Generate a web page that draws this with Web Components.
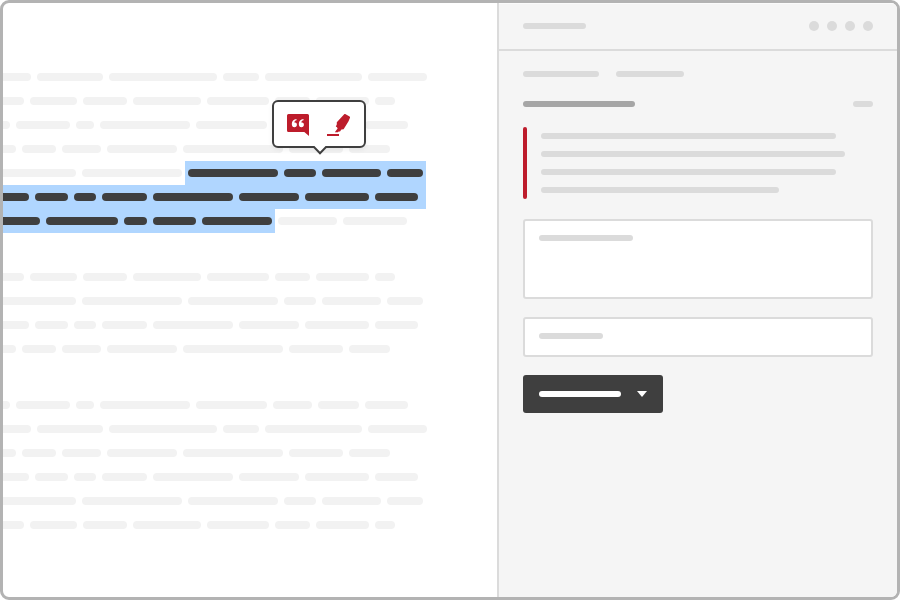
<!DOCTYPE html>
<html lang="en">
<head>
<meta charset="utf-8">
<title>Annotate selection</title>
<style>
html, body { margin: 0; height: 100%; background: #fff; font-family: "Liberation Sans", sans-serif; }
</style>
</head>
<body>
<app-window>
  <reading-pane slot="main"></reading-pane>
  <annotation-panel slot="side"></annotation-panel>
</app-window>
<script>
class Base extends HTMLElement {
  constructor() {
    super();
    this.attachShadow({ mode: 'open' }).innerHTML =
      '<style>:host{display:block;box-sizing:border-box}' + this.constructor.css + '</style>' + this.constructor.html;
  }
}
Base.css = '';
Base.html = '<slot></slot>';

customElements.define('app-window', class extends Base {
  static css = `
    :host { display: flex; width: 900px; height: 600px; border: 3px solid #b3b3b3; border-radius: 9px; overflow: hidden; background: #fff; }
    .main { flex: 1; min-width: 0; overflow: hidden; }
    .side { width: 400px; flex: none; }`;
  static html = '<div class="main"><slot name="main"></slot></div><div class="side"><slot name="side"></slot></div>';
});

// A rounded placeholder bar; its width comes from the "w" attribute.
customElements.define('text-bar', class extends Base {
  static css = ':host{flex:none;height:var(--bar-height,6px);border-radius:4px;background:var(--bar-color,#dbdbdb)}';
  connectedCallback() { this.style.width = this.getAttribute('w') + 'px'; }
});

// A run of words inside a line, optionally selected.
customElements.define('word-run', class extends Base {
  static css = `
    :host { display: flex; align-items: center; gap: 6px; flex: none; height: 24px; padding: 0 3px; --bar-height: 8px; --bar-color: #f2f2f2; }
    :host([selected]) { background: #b0d6ff; --bar-color: #3f3f3f; }`;
  static html = '<div style="display:contents"></div>';
  connectedCallback() {
    this.shadowRoot.querySelector('div').innerHTML =
      this.getAttribute('words').split(' ').map(w => `<text-bar w="${w}"></text-bar>`).join('');
  }
});

customElements.define('text-line', class extends Base {
  static css = ':host{display:flex;height:24px;margin-left:-13px}';
});

const LINES = {
  A: '38 66 108 36 97 59',
  B: '31 47 44 68 62 35 53 20',
  C: '17 54 18 90 71 39 41 43',
  D: '23 34 39 70 100 54 41',
  E: '83 100 90 32 59 36',
  F: '36 33 22 45 80 60 64 43'
};
const lines = keys => [...keys].map(k => `<text-line><word-run words="${LINES[k]}"></word-run></text-line>`).join('');

customElements.define('reading-pane', class extends Base {
  static css = `
    :host { padding-top: 62px; height: 594px; position: relative; }
    section { margin-bottom: 32px; }
    .full { width: 436px; }
    selection-menu { position: absolute; left: 269px; top: 97px; }`;
  static html = `
    <section>${lines('ABCD')}
      <text-line><word-run words="83 100"></word-run><word-run selected words="90 32 59 36"></word-run></text-line>
      <text-line><word-run class="full" selected words="${LINES.F}"></word-run></text-line>
      <text-line><word-run selected words="47 72 23 43 70"></word-run><word-run words="59 64"></word-run></text-line>
    </section>
    <section>${lines('BEFD')}</section>
    <section>${lines('CADFEB')}</section>
    <selection-menu></selection-menu>`;
});

customElements.define('selection-menu', class extends Base {
  static css = `
    :host { display: flex; gap: 17px; width: 94px; height: 48px; padding: 12px 13px; border: 2px solid #3f3f3f; border-radius: 6px; background: #fff; box-shadow: 0 2px 5px rgba(0,0,0,.06); }
    svg { display: block; flex: none; }
    .tip { position: absolute; left: 39px; top: 44px; }`;
  static html = `
    <svg width="22" height="22" viewBox="0 0 22 22">
      <path fill="#bd1c2b" d="M1.5 0h19Q22 0 22 1.5V22L17.3 18H1.5Q0 18 0 16.5v-15Q0 0 1.5 0z"/>
      <g fill="#fff"><path id="q" d="M9.5 4.9v1.3C8.2 6.5 7.4 7.3 7.3 8.6c.2-.1.4-.1.7-.1 1.1 0 1.9.9 1.9 2.2 0 1.5-1 2.5-2.4 2.5-1.7 0-2.7-1.3-2.7-3.3 0-2.7 1.8-4.7 4.7-5z"/>
      <use href="#q" x="7"/></g>
    </svg>
    <svg width="25" height="22" viewBox="0 0 25 22">
      <path fill="#bd1c2b" d="M1 20h12v2H1zM19.2 0 23.6 2.5Q24.3 3 24 3.8L22.4 7.6 17.6 15.2 15.4 15.6 14 17.6 12.6 17.4 12 18.2H8.8L11.6 14.4 11 13.2 9.8 12.4 10.8 10.6V8.2L18.2.3Q18.7-.2 19.2 0z"/>
    </svg>
    <svg class="tip" width="14" height="9" viewBox="0 0 14 9">
      <path d="M0 0H14V1L7 8 0 1z" fill="#fff"/>
      <path d="M0 1H1L7 7.2 13 1h1" fill="none" stroke="#3f3f3f" stroke-width="2"/>
    </svg>`;
});

customElements.define('panel-header', class extends Base {
  static css = `
    :host { display: flex; align-items: center; justify-content: space-between; height: 48px; padding: 0 24px; border-bottom: 2px solid #dbdbdb; box-shadow: inset 0 1px #fbfbfb; }
    div { display: flex; gap: 8px; }
    i { width: 10px; height: 10px; border-radius: 50%; background: #dbdbdb; }`;
  static html = '<text-bar w="63"></text-bar><div><i></i><i></i><i></i><i></i></div>';
});

customElements.define('quoted-text', class extends Base {
  static css = `
    :host { display: flex; gap: 14px; height: 72px; }
    .rule { width: 4px; border-radius: 2px; background: #bd1c2b; }
    .lines { display: flex; flex-direction: column; gap: 12px; padding-top: 6px; }`;
  static html = '<div class="rule"></div><div class="lines"><slot></slot></div>';
});

customElements.define('input-box', class extends Base {
  static css = `
    :host { height: 40px; padding: 14px; border: 2px solid #dbdbdb; border-radius: 3px; background: #fff; }
    :host([tall]) { height: 80px; }`;
});

customElements.define('menu-button', class extends Base {
  static css = `
    :host { display: flex; align-items: center; justify-content: space-between; width: 140px; height: 38px; padding: 0 16px; border-radius: 3px; background: #3f3f3f; --bar-color: #fff; }`;
  static html = '<slot></slot><svg width="10" height="6" viewBox="0 0 10 6"><path d="M0 0h10L5 6z" fill="#fff"/></svg>';
});

customElements.define('annotation-panel', class extends Base {
  static css = `
    :host { height: 594px; background: #f5f5f5; border-left: 2px solid #dbdbdb; }
    .body { padding: 20px 24px; }
    .tabs { display: flex; gap: 17px; }
    .author { display: flex; justify-content: space-between; margin: 24px 0 20px; }
    .author text-bar:first-child { --bar-color: #a6a6a6; }
    input-box[tall] { margin: 20px 0 18px; }
    menu-button { margin-top: 18px; }`;
  static html = `
    <panel-header></panel-header>
    <div class="body">
      <div class="tabs"><text-bar w="76"></text-bar><text-bar w="68"></text-bar></div>
      <div class="author"><text-bar w="112"></text-bar><text-bar w="20"></text-bar></div>
      <quoted-text><text-bar w="295"></text-bar><text-bar w="303.6"></text-bar><text-bar w="295"></text-bar><text-bar w="238"></text-bar></quoted-text>
      <input-box tall><text-bar w="94"></text-bar></input-box>
      <input-box><text-bar w="64"></text-bar></input-box>
      <menu-button><text-bar w="82"></text-bar></menu-button>
    </div>`;
});
</script>
</body>
</html>
